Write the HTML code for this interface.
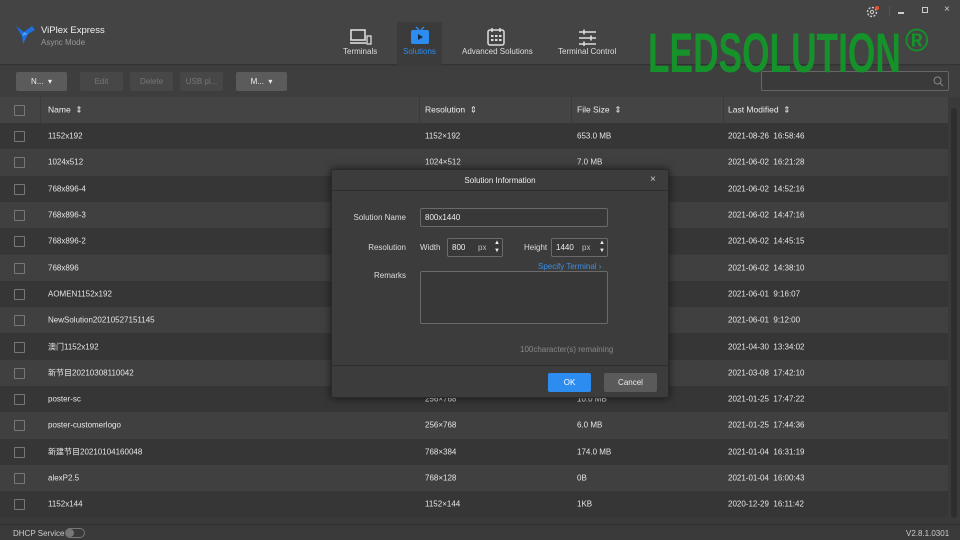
<!DOCTYPE html>
<html><head><meta charset="utf-8"><style>
*{margin:0;padding:0;box-sizing:border-box}
body{width:960px;height:540px;overflow:hidden;background:#3a3a3a;font-family:"Liberation Sans","Noto Sans CJK SC",sans-serif;color:#ddd;font-size:8px;position:relative}
.abs{position:absolute}
.top{left:0;top:0;width:960px;height:65px;background:#444;border-bottom:1px solid #333}
.tb{left:0;top:66px;width:960px;height:31px;background:#3e3e3e}
.btn{position:absolute;top:72px;height:19px;border-radius:2px;font-size:8px;text-align:center;line-height:19px}
.hdr{left:0;top:97px;width:948px;height:26px;background:#444;font-size:8.5px;color:#eee}
.row{position:absolute;left:0;width:948px;height:26.3px;font-size:8px;color:#e6e6e6}
.row span,.hdr span{position:absolute;top:50%;transform:translateY(-50%);white-space:nowrap}
.cb{position:absolute;left:14px;top:50%;margin-top:-5px;width:11px;height:11px;border:1px solid #777;border-radius:1px}
.d{background:#363636}.l{background:#404040}
.dlg{left:331px;top:169px;width:338px;height:229px;background:#3c3c3c;border:1px solid #2a2a2a;box-shadow:0 0 8px rgba(0,0,0,.6)}
.inp{position:absolute;border:1px solid #6a6a6a;border-radius:2px;background:#383838;font-size:8px;color:#eee}
.lbl{position:absolute;font-size:8px;color:#ddd;white-space:nowrap}
.nav{position:absolute;top:47px;font-size:8px;color:#ddd;white-space:nowrap}
</style></head><body>
<div class="abs top"></div>
<svg class="abs" style="left:16px;top:24px" width="20" height="22" viewBox="0 0 20 22"><path d="M0 2 L8 8 L16 2 L19 6 L12 10 L7 20 L6 12 Z" fill="#1e6fe0"/><path d="M6 12 L12 10 L8 8 Z" fill="#4aa3ff"/></svg>
<div class="abs" style="left:41px;top:25px;font-size:9.5px;color:#f0f0f0">ViPlex Express</div>
<div class="abs" style="left:41px;top:38px;font-size:8px;color:#999">Async Mode</div>
<div class="abs" style="left:397px;top:22px;width:45px;height:43px;background:#3b3b3b"></div>
<svg class="abs" style="left:350px;top:29px" width="22" height="18" viewBox="0 0 22 18"><rect x="1" y="1" width="14" height="10" fill="none" stroke="#ddd" stroke-width="1.6"/><line x1="0" y1="14" x2="16" y2="14" stroke="#ddd" stroke-width="1.6"/><rect x="17" y="7" width="4" height="8" fill="none" stroke="#ddd" stroke-width="1.3"/></svg>
<div class="nav" style="left:343px">Terminals</div>
<svg class="abs" style="left:410px;top:26px" width="20" height="19" viewBox="0 0 20 19"><path d="M6 1 L9 4 M14 1 L11 4" stroke="#2d8cf0" stroke-width="1.4"/><rect x="1" y="4" width="18" height="14" rx="2" fill="#2d8cf0"/><path d="M8 8 L13 11 L8 14 Z" fill="#1a2a40"/></svg>
<div class="nav" style="left:403px;color:#2d8cf0">Solutions</div>
<svg class="abs" style="left:487px;top:27px" width="18" height="19" viewBox="0 0 18 19"><rect x="1" y="3" width="16" height="15" rx="2" fill="none" stroke="#ddd" stroke-width="1.5"/><line x1="5" y1="1" x2="5" y2="5" stroke="#ddd" stroke-width="1.5"/><line x1="13" y1="1" x2="13" y2="5" stroke="#ddd" stroke-width="1.5"/><g fill="#ddd"><rect x="4" y="8" width="2.5" height="2"/><rect x="8" y="8" width="2.5" height="2"/><rect x="12" y="8" width="2.5" height="2"/><rect x="4" y="12" width="2.5" height="2"/><rect x="8" y="12" width="2.5" height="2"/><rect x="12" y="12" width="2.5" height="2"/></g></svg>
<div class="nav" style="left:462px">Advanced Solutions</div>
<svg class="abs" style="left:578px;top:29px" width="19" height="17" viewBox="0 0 19 17"><g stroke="#ddd" stroke-width="1.6"><line x1="1" y1="3" x2="18" y2="3"/><line x1="1" y1="9" x2="18" y2="9"/><line x1="1" y1="15" x2="18" y2="15"/><line x1="6" y1="0.5" x2="6" y2="5.5"/><line x1="13" y1="6.5" x2="13" y2="11.5"/><line x1="6" y1="12.5" x2="6" y2="17"/></g></svg>
<div class="nav" style="left:558px">Terminal Control</div>
<svg class="abs" style="left:866px;top:5px" width="14" height="14" viewBox="0 0 14 14"><circle cx="6" cy="7" r="4.5" fill="none" stroke="#ccc" stroke-width="1.4" stroke-dasharray="2 1.5"/><circle cx="6" cy="7" r="1.6" fill="none" stroke="#ccc"/><circle cx="11" cy="3" r="2" fill="#f05030"/></svg>
<div class="abs" style="left:889px;top:6px;width:1px;height:10px;background:#555"></div>
<div class="abs" style="left:898px;top:12px;width:6px;height:1.5px;background:#ccc"></div>
<div class="abs" style="left:922px;top:7px;width:6px;height:6px;border:1px solid #ccc"></div>
<div class="abs" style="left:944px;top:4px;font-size:10px;color:#ccc">×</div>
<div class="abs tb"></div>
<div class="btn" style="left:16px;width:51px;background:#5b5b5b;color:#eee">N... &nbsp;▾</div>
<div class="btn" style="left:80px;width:43px;background:#474747;color:#777">Edit</div>
<div class="btn" style="left:130px;width:43px;background:#474747;color:#777">Delete</div>
<div class="btn" style="left:180px;width:43px;background:#474747;color:#777">USB pl...</div>
<div class="btn" style="left:236px;width:51px;background:#5b5b5b;color:#eee">M... &nbsp;▾</div>
<div class="abs" style="left:761px;top:71px;width:188px;height:20px;border:1px solid #666;border-radius:2px;background:#3a3a3a"></div>
<svg class="abs" style="left:933px;top:76px" width="11" height="11" viewBox="0 0 11 11"><circle cx="4.5" cy="4.5" r="3.5" fill="none" stroke="#888"/><line x1="7" y1="7" x2="10" y2="10" stroke="#888"/></svg>
<div class="abs" style="left:648px;top:23px;font-size:56px;font-weight:bold;color:#15922a;transform:scaleX(0.63);transform-origin:0 0;white-space:nowrap;line-height:60px;z-index:10">LEDSOLUTION</div>
<div class="abs" style="left:905px;top:24px;font-size:32px;font-weight:bold;color:#15922a;line-height:32px;z-index:10">®</div>
<div class="abs hdr"><div class="cb"></div>
<div class="abs" style="left:40px;top:0;width:1px;height:26px;background:#3a3a3a"></div>
<div class="abs" style="left:419px;top:0;width:1px;height:26px;background:#3a3a3a"></div>
<div class="abs" style="left:571px;top:0;width:1px;height:26px;background:#3a3a3a"></div>
<div class="abs" style="left:723px;top:0;width:1px;height:26px;background:#3a3a3a"></div>
<span style="left:48px">Name &nbsp;⇕</span><span style="left:425px">Resolution &nbsp;⇕</span><span style="left:577px">File Size &nbsp;⇕</span><span style="left:728px">Last Modified &nbsp;⇕</span></div>
<div id="rows"></div>
<div class="abs" style="left:948px;top:97px;width:12px;height:427px;background:#3a3a3a"></div>
<div class="abs" style="left:951px;top:108px;width:6px;height:410px;background:#2e2e2e;border-radius:3px"></div>
<div class="abs" style="left:0;top:524px;width:960px;height:16px;background:#3a3a3a;border-top:1px solid #2e2e2e"></div>
<div class="abs" style="left:13px;top:529px;font-size:8px;color:#ccc">DHCP Service</div>
<div class="abs" style="left:65px;top:528px;width:20px;height:10px;border:1px solid #777;border-radius:5px"><div style="width:8px;height:8px;border-radius:4px;background:#777"></div></div>
<div class="abs" style="left:906px;top:529px;font-size:8px;color:#ccc">V2.8.1.0301</div>
<div class="abs dlg">
<div class="abs" style="left:0;top:0;width:336px;height:21px;border-bottom:1px solid #2e2e2e;text-align:center;line-height:21px;font-size:8px;color:#eee">Solution Information</div>
<div class="abs" style="left:318px;top:4px;font-size:10px;color:#ccc">×</div>
<div class="lbl" style="right:262px;top:43px">Solution Name</div>
<div class="inp" style="left:88px;top:38px;width:188px;height:19px;padding:4px 4px">800x1440</div>
<div class="lbl" style="right:262px;top:73px">Resolution</div>
<div class="lbl" style="left:88px;top:73px">Width</div>
<div class="inp" style="left:115px;top:68px;width:56px;height:19px;padding:4px 4px">800<span style="position:absolute;left:30px;color:#bbb">px</span><span style="position:absolute;right:2px;top:0;font-size:6px;line-height:8px">▲<br>▼</span></div>
<div class="lbl" style="left:192px;top:73px">Height</div>
<div class="inp" style="left:219px;top:68px;width:57px;height:19px;padding:4px 4px">1440<span style="position:absolute;left:30px;color:#bbb">px</span><span style="position:absolute;right:2px;top:0;font-size:6px;line-height:8px">▲<br>▼</span></div>
<div class="lbl" style="left:206px;top:92px;color:#3a8ee6">Specify Terminal ›</div>
<div class="lbl" style="right:262px;top:101px">Remarks</div>
<div class="inp" style="left:88px;top:101px;width:188px;height:53px"></div>
<div class="lbl" style="left:188px;top:175px;color:#888">100character(s) remaining</div>
<div class="abs" style="left:0;top:195px;width:336px;height:1px;background:#2e2e2e"></div>
<div class="abs" style="left:216px;top:203px;width:43px;height:19px;background:#2d8cf0;border-radius:2px;color:#fff;text-align:center;line-height:19px">OK</div>
<div class="abs" style="left:272px;top:203px;width:53px;height:19px;background:#5a5a5a;border-radius:2px;color:#eee;text-align:center;line-height:19px">Cancel</div>
</div>
<script>
var d=[["1152x192","1152×192","653.0 MB","2021-08-26&nbsp; 16:58:46"],["1024x512","1024×512","7.0 MB","2021-06-02&nbsp; 16:21:28"],["768x896-4","","","2021-06-02&nbsp; 14:52:16"],["768x896-3","","","2021-06-02&nbsp; 14:47:16"],["768x896-2","","","2021-06-02&nbsp; 14:45:15"],["768x896","","","2021-06-02&nbsp; 14:38:10"],["AOMEN1152x192","","","2021-06-01&nbsp; 9:16:07"],["NewSolution20210527151145","","","2021-06-01&nbsp; 9:12:00"],["澳门1152x192","","","2021-04-30&nbsp; 13:34:02"],["新节目20210308110042","","","2021-03-08&nbsp; 17:42:10"],["poster-sc","256×768","10.0 MB","2021-01-25&nbsp; 17:47:22"],["poster-customerlogo","256×768","6.0 MB","2021-01-25&nbsp; 17:44:36"],["新建节目20210104160048","768×384","174.0 MB","2021-01-04&nbsp; 16:31:19"],["alexP2.5","768×128","0B","2021-01-04&nbsp; 16:00:43"],["1152x144","1152×144","1KB","2020-12-29&nbsp; 16:11:42"]];
var h="";d.forEach(function(r,i){h+='<div class="row '+(i%2?'l':'d')+'" style="top:'+(123+i*26.3)+'px"><div class="cb"></div><span style="left:48px">'+r[0]+'</span><span style="left:425px">'+r[1]+'</span><span style="left:577px">'+r[2]+'</span><span style="left:728px">'+r[3]+'</span></div>'});
document.getElementById("rows").innerHTML=h;
</script>
</body></html>
